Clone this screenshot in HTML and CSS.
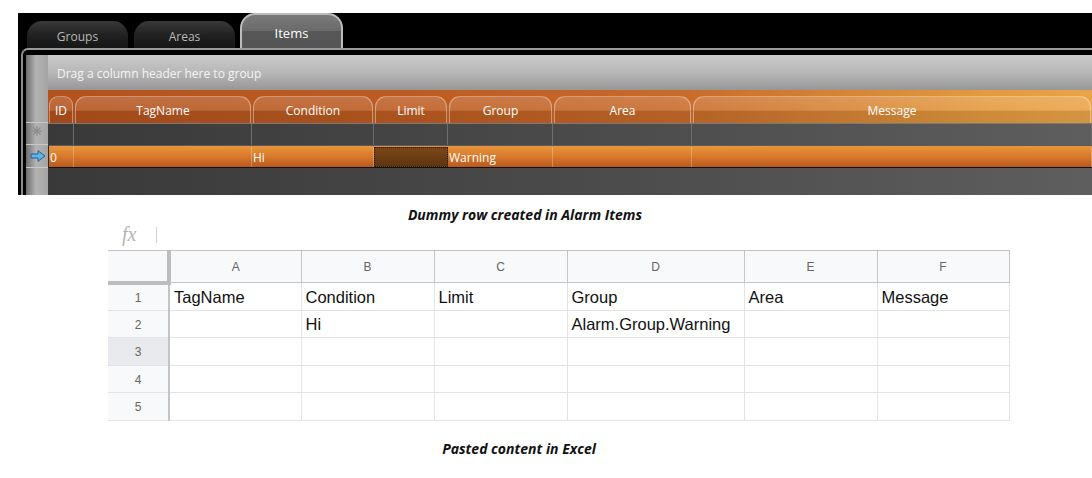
FILE: index.html
```html
<!DOCTYPE html>
<html lang="en">
<head>
  <meta charset="UTF-8">
  <title>Alarm Items</title>
  <link rel="stylesheet" href="styles.css">
</head>
<body>
  <div class="app">
    <div class="tabs">
      <div class="tab">Groups</div>
      <div class="tab">Areas</div>
      <div class="tab active">Items</div>
    </div>
    <div class="frame">
      <div class="gutter">
        <div class="g-bar"></div>
        <div class="g-hdr"></div>
        <div class="g-row star">
          <svg width="10" height="10" viewBox="0 0 10 10"><g stroke="#8a8a8a" stroke-width="1.2"><line x1="5" y1="0" x2="5" y2="10"/><line x1="0" y1="5" x2="10" y2="5"/><line x1="1.5" y1="1.5" x2="8.5" y2="8.5"/><line x1="8.5" y1="1.5" x2="1.5" y2="8.5"/></g></svg>
        </div>
        <div class="g-row sel">
          <svg width="16" height="12" viewBox="0 0 16 12"><polygon points="1,4 8,4 8,0.8 15,6 8,11.2 8,8 1,8" fill="#5fb4ea" stroke="#1f5e96" stroke-width="1"/></svg>
        </div>
        <div class="g-rest"></div>
      </div>
      <div class="main">
        <div class="groupbar">Drag a column header here to group</div>
        <div class="row hdr">
          <div class="c c-id"><span class="cap">ID</span></div>
          <div class="c c-tag"><span class="cap">TagName</span></div>
          <div class="c c-cond"><span class="cap">Condition</span></div>
          <div class="c c-lim"><span class="cap">Limit</span></div>
          <div class="c c-grp"><span class="cap">Group</span></div>
          <div class="c c-area"><span class="cap">Area</span></div>
          <div class="c c-msg"><span class="cap">Message</span></div>
        </div>
        <div class="row newrow">
          <div class="c c-id"></div>
          <div class="c c-tag"></div>
          <div class="c c-cond"></div>
          <div class="c c-lim"></div>
          <div class="c c-grp"></div>
          <div class="c c-area"></div>
          <div class="c c-msg"></div>
        </div>
        <div class="row selrow">
          <div class="c c-id">0</div>
          <div class="c c-tag"></div>
          <div class="c c-cond">Hi</div>
          <div class="c c-lim focus"></div>
          <div class="c c-grp">Warning</div>
          <div class="c c-area"></div>
          <div class="c c-msg"></div>
        </div>
        <div class="rest"></div>
      </div>
    </div>
  </div>

  <p class="caption cap-top">Dummy row created in Alarm Items</p>

  <div class="sheet">
    <div class="formula"><span class="fx">fx</span><span class="fx-sep"></span></div>
    <table class="grid">
      <colgroup>
        <col style="width:61px"><col style="width:132px"><col style="width:133px"><col style="width:133px">
        <col style="width:177px"><col style="width:133px"><col style="width:132px">
      </colgroup>
      <tr class="letters">
        <th class="corner"></th><th>A</th><th>B</th><th>C</th><th>D</th><th>E</th><th>F</th>
      </tr>
      <tr>
        <th class="num">1</th><td>TagName</td><td>Condition</td><td>Limit</td><td>Group</td><td>Area</td><td>Message</td>
      </tr>
      <tr>
        <th class="num">2</th><td></td><td>Hi</td><td></td><td>Alarm.Group.Warning</td><td></td><td></td>
      </tr>
      <tr>
        <th class="num active">3</th><td></td><td></td><td></td><td></td><td></td><td></td>
      </tr>
      <tr>
        <th class="num">4</th><td></td><td></td><td></td><td></td><td></td><td></td>
      </tr>
      <tr>
        <th class="num">5</th><td></td><td></td><td></td><td></td><td></td><td></td>
      </tr>
    </table>
  </div>

  <p class="caption cap-bottom">Pasted content in Excel</p>
</body>
</html>
```

FILE: styles.css
```css
body {
  margin: 0;
  background: #ffffff;
  font-family: "Open Sans", "Noto Sans", sans-serif;
}
.app {
  margin: 13px 0 0 18px;
  height: 182px;
  background: #000000;
  display: flex;
  flex-direction: column;
  overflow: hidden;
}
.tabs {
  height: 35px;
  display: flex;
  align-items: flex-end;
  padding-left: 9px;
}
.tab {
  width: 101px;
  height: 27px;
  margin-right: 6px;
  box-sizing: border-box;
  padding-top: 7px;
  border-radius: 15px 15px 0 0;
  background: linear-gradient(to bottom, #3a3a3a, #222222 50%, #161616);
  color: #b8b8b8;
  font-size: 12px;
  text-align: center;
}
.tab.active {
  width: 103px;
  height: 35px;
  margin-left: -1px;
  padding-top: 9px;
  border: 2px solid #bdbdbd;
  border-bottom: none;
  background: linear-gradient(to bottom, #7a7a7a, #6a6a6a 50%, #575757 50%, #555555);
  color: #ffffff;
  font-size: 13px;
}
.frame {
  flex: 1;
  margin-left: 3px;
  display: flex;
  padding: 5px 0 0 3px;
  border-top: 2px solid #9a9a9a;
  border-left: 2px solid #8c8c8c;
  border-top-left-radius: 7px;
}
.gutter {
  width: 22px;
  display: flex;
  flex-direction: column;
  background: linear-gradient(to right, #6c6c6c, #b4b4b4 45%, #a4a4a4);
}
.g-bar { height: 35px; }
.g-hdr { height: 33px; border-bottom: 1px solid #c8c8c8; box-sizing: border-box; }
.g-row {
  height: 22px;
  box-sizing: border-box;
  border-bottom: 1px solid #c8c8c8;
  display: flex;
  align-items: center;
  justify-content: center;
}
.g-row.star { align-items: flex-start; padding-top: 3px; }
.g-row.sel { height: 23px; padding-left: 2px; }
.g-rest { flex: 1; }
.main {
  flex: 1;
  display: flex;
  flex-direction: column;
}
.groupbar {
  height: 35px;
  box-sizing: border-box;
  padding: 10px 0 0 9px;
  background: linear-gradient(to bottom, #cacaca, #b7b7b7 50%, #979797);
  color: #f4f4f4;
  font-size: 12px;
}
.row {
  display: flex;
  font-size: 12px;
  color: #ffffff;
}
.c { box-sizing: border-box; }
.c-id { width: 26px; }
.c-tag { width: 178px; }
.c-cond { width: 122px; }
.c-lim { width: 74px; }
.c-grp { width: 105px; }
.c-area { width: 139px; }
.c-msg { flex: 1; }
.hdr {
  height: 33px;
  background:
    linear-gradient(to bottom, rgba(255,255,255,0) 0 60%, rgba(0,0,0,0.06) 60%),
    linear-gradient(to right, #b3521d, #bd5c22 35%, #c86a2a 60%, #e49a3e 90%, #eaa448);
}
.hdr .c {
  display: flex;
  padding: 6px 1px 0 1px;
}
.cap {
  flex: 1;
  border: 1px solid rgba(255,255,255,0.38);
  border-bottom: none;
  border-radius: 11px 11px 0 0;
  background: linear-gradient(to bottom, rgba(255,255,255,0.16), rgba(255,255,255,0.1) 55%, rgba(0,0,0,0.04) 55%);
  text-align: center;
  padding-top: 5px;
}
.c-id .cap { border-radius: 9px 9px 0 0; }
.newrow {
  height: 22px;
  background: linear-gradient(to right, #393939, #4a4a4a 50%, #5e5e5e);
  border-top: 1px solid #7a7a7a;
  box-sizing: border-box;
}
.newrow .c { border-right: 1px solid #6e6e6e; }
.selrow {
  height: 23px;
  box-sizing: border-box;
  padding-top: 1px;
  border-left: 1px solid #2a2a2a;
  border-top: 1px solid #5a5a5a;
  border-bottom: 1px solid #111111;
  background: linear-gradient(to bottom, #e8953a, #d8792c 50%, #b9581f);
}
.selrow .c {
  border-right: 1px solid rgba(255,255,255,0.25);
  padding: 2px 0 0 1px;
}
.selrow .c-id { width: 25px; }
.selrow .focus {
  background: linear-gradient(to bottom, #7a4616, #5e3510);
  border: 1px dotted #2a1a08;
}
.rest {
  flex: 1;
  background: linear-gradient(to right, #393939, #4a4a4a 50%, #5e5e5e);
}
.caption {
  margin: 0;
  font-size: 14px;
  font-weight: bold;
  font-style: italic;
  line-height: 18px;
  text-align: center;
  color: #111111;
}
.cap-top {
  width: 1050px;
  margin-top: 11px;
}
.cap-bottom {
  width: 1038px;
  margin-top: 19px;
}
.sheet {
  margin-left: 108px;
  width: 901px;
}
.formula {
  height: 21px;
  display: flex;
  align-items: center;
  padding-left: 14px;
}
.fx {
  font-family: "Liberation Serif", serif;
  font-style: italic;
  font-size: 20px;
  color: #b4b4b4;
}
.fx-sep {
  width: 1px;
  height: 16px;
  margin-left: 20px;
  background: #d0d0d0;
}
.grid {
  margin-top: 5px;
  border-collapse: collapse;
  table-layout: fixed;
  width: 901px;
  font-family: "Liberation Sans", Arial, sans-serif;
}
.grid th, .grid td {
  height: 27.5px;
  border: 1px solid #e2e3e3;
  padding: 2px 0 0 4px;
  box-sizing: border-box;
}
.grid td {
  font-size: 16.5px;
  color: #111111;
  text-align: left;
}
.letters th {
  height: 32px;
  background: #f8f9fa;
  border-top: 1px solid #c4c4c4;
  border-color: #c4c4c4;
  font-size: 12px;
  font-weight: normal;
  color: #666666;
  text-align: center;
  padding: 0;
}
.letters th.corner {
  border-right: 4px solid #bdbdbd;
  border-bottom: 4px solid #bdbdbd;
  border-left: none;
}
.grid th.num {
  background: #f8f9fa;
  border-left: none;
  border-right: 2px solid #c4c4c4;
  font-size: 12px;
  font-weight: normal;
  color: #666666;
  text-align: center;
  padding: 2px 0 0 0;
}
.grid th.num.active { background: #e8eaed; }
```
